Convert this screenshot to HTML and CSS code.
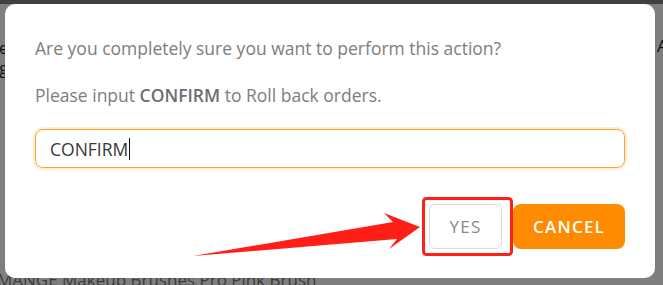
FILE: index.html
```html
<!DOCTYPE html>
<html lang="en">
<head>
<meta charset="utf-8">
<title>Confirm</title>
<link rel="stylesheet" href="styles.css">
</head>
<body>
  <div class="topbar"></div>
  <div class="page">
    <div class="side side-left">
      <div class="side-line">Name</div>
      <div class="side-line">Categorg</div>
    </div>
    <div class="side side-right">
      <div class="side-line">Action</div>
    </div>
  </div>
  <div class="page-bottom">MANGE Makeup Brushes Pro Pink Brush</div>

  <div class="modal">
    <p class="msg">Are you completely sure you want to perform this action?</p>
    <p class="msg">Please input <strong>CONFIRM</strong> to Roll back orders.</p>
    <div class="input"><span class="input-text">CONFIRM</span><span class="caret"></span></div>
    <div class="actions">
      <button class="btn btn-yes">YES</button>
      <button class="btn btn-cancel">CANCEL</button>
    </div>
  </div>

  <svg class="annot" width="663" height="285" viewBox="0 0 663 285">
    <rect x="423.5" y="198.5" width="88" height="56" rx="3" ry="3" fill="none" stroke="#ff1f17" stroke-width="3"/>
    <polygon points="193,256 393,222 384,213 420,227 389,249 397,239" fill="#ff1f17"/>
  </svg>
</body>
</html>
```
FILE: styles.css
```css
html, body {
  margin: 0;
  padding: 0;
}
body {
  width: 663px;
  height: 285px;
  overflow: hidden;
  position: relative;
  background: #7f7f7f;
  font-family: "Open Sans", "Noto Sans", sans-serif;
}
.topbar {
  height: 4px;
  background: #404040;
}
.page {
  display: flex;
  justify-content: space-between;
  height: 266px;
}
.side {
  width: 8px;
  overflow: hidden;
  padding-top: 34px;
  font-size: 16px;
  line-height: 20px;
  color: #111;
}
.side-left .side-line {
  display: flex;
  justify-content: flex-end;
  white-space: nowrap;
}
.side-right {
  width: 8px;
  padding-top: 32px;
}
.side-right .side-line {
  padding-left: 2px;
  white-space: nowrap;
  font-size: 17px;
}
.page-bottom {
  margin-left: -3px;
  white-space: nowrap;
  font-size: 17px;
  line-height: 20px;
  color: #3b3b3b;
}
.modal {
  position: absolute;
  left: 5px;
  top: 4px;
  width: 650px;
  height: 274px;
  box-sizing: border-box;
  padding: 32px 30px 0 30px;
  background: #fff;
  border-radius: 10px;
}
.msg {
  margin: 0 0 23px 0;
  font-size: 17.5px;
  line-height: 24px;
  color: #7d7d7d;
}
.msg strong {
  font-weight: 600;
  color: #6e6e6e;
}
.input {
  margin-top: -1px;
  height: 39px;
  box-sizing: border-box;
  border: 1px solid #ffa42a;
  border-radius: 8px;
  box-shadow: 0 0 0 2px rgba(255, 170, 60, 0.22);
  display: flex;
  align-items: center;
  padding-left: 14px;
  font-size: 17.5px;
  color: #383838;
}
.caret {
  display: inline-block;
  width: 1px;
  height: 22px;
  background: #111;
  margin-left: 1px;
}
.actions {
  display: flex;
  justify-content: flex-end;
  gap: 11px;
  margin-top: 36px;
}
.btn {
  height: 45px;
  box-sizing: border-box;
  font-family: "Open Sans", "Noto Sans", sans-serif;
  font-size: 17px;
  letter-spacing: 1.2px;
  cursor: pointer;
}
.btn-yes {
  width: 73px;
  background: #fff;
  border: 1px solid #dcdcdc;
  border-radius: 6px;
  color: #8a8a8a;
}
.btn-cancel {
  width: 112px;
  background: #ff8b00;
  border: none;
  border-radius: 8px;
  color: #fff;
  font-weight: 600;
}
.annot {
  position: absolute;
  left: 0;
  top: 0;
  pointer-events: none;
}
```
